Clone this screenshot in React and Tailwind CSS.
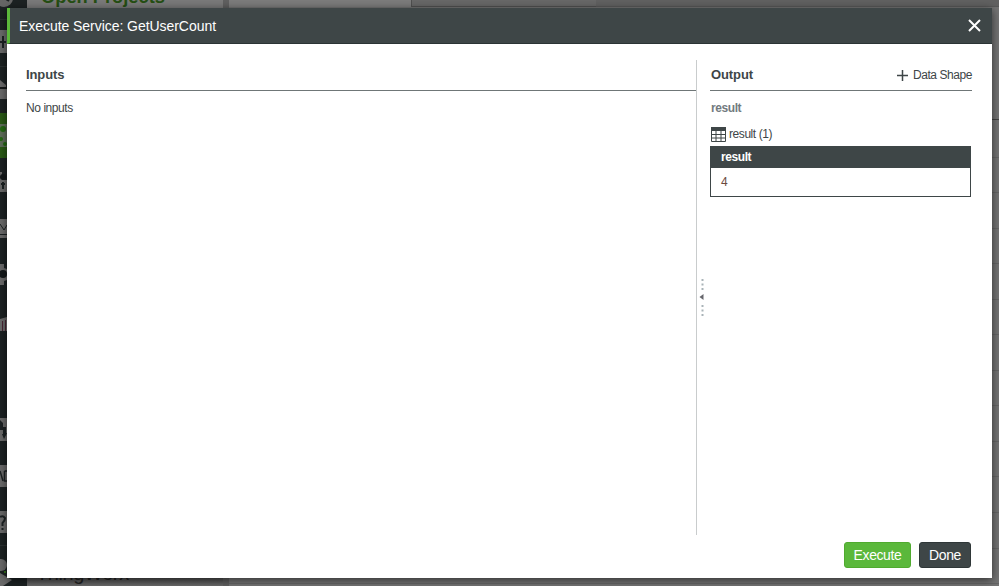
const ROWS = Array.from({ length: 13 }, (_, i) => i)

function Rail() {
  return (
    <div className="h-full w-[27px] shrink-0 bg-[#1c2223]">
      <svg width="27" height="586" viewBox="0 0 27 586" fill="none">
        <circle cx="4" cy="-2" r="9" fill="#666" />
        <path d="M6 -1 L9 1" stroke="#1c2223" strokeWidth="2" />
        <path d="M0 19.5H27M0 66.5H27M0 545.5H27" stroke="#2b3132" />
        <rect y="30" width="10" height="23" fill="#6b6b6b" />
        <path d="M0 42H6M3 36V48" stroke="#1c2223" strokeWidth="2" />
        <path d="M0 80L6 85V87H0Z" fill="#6b6b6b" />
        <rect y="89" width="10" height="10" fill="#6b6b6b" />
        <path d="M0 88H7" stroke="#111" />
        <rect y="113" width="27" height="45" fill="#2a5b16" />
        <path d="M0 124H7V147H0Z" fill="#5f6f5a" />
        <circle cx="3" cy="129" r="3" fill="#246a12" />
        <circle cx="1" cy="139" r="2" fill="#246a12" />
        <circle cx="5" cy="144" r="2" fill="#246a12" />
        <path d="M0 172H2V180H0ZM0 180H7V192H0Z" fill="#6b6b6b" />
        <circle cx="3" cy="177" r="3" fill="#14191a" />
        <path d="M1 184H5M3 182V189" stroke="#1c2223" strokeWidth="2" />
        <rect y="219" width="10" height="19" fill="#6b6b6b" />
        <path d="M0 224L4 230L7 225M0 234.500H7" stroke="#1c2223" />
        <path d="M0 264H4V268L7 269V280L4 281V285H0Z" fill="#6b6b6b" />
        <circle cx="3" cy="274" r="4" fill="#14191a" />
        <path d="M0 319L7 317V331H0Z" fill="#6b6b6b" />
        <path d="M2.500 321V331M5.500 320V331" stroke="#4a2534" />
        <rect y="418" width="10" height="23" fill="#6b6b6b" />
        <path d="M0 420L3 423V427H6V433H7L4 439L2 434H3V430H0Z" fill="#1c2223" />
        <rect y="465" width="10" height="22" fill="#6b6b6b" />
        <path d="M0 471L3 481M4.500 471V481H7M4.500 471H7" stroke="#1c2223" strokeWidth="1.500" />
        <rect y="511" width="10" height="22" fill="#6b6b6b" />
        <path d="M0 517Q3 515 5 518Q5 521 2.500 523V526M2.500 528V530" stroke="#1c2223" strokeWidth="2" />
        <circle cx="1" cy="565" r="6" fill="#6b6b6b" />
        <path d="M0 573L12 580L3 586H0Z" fill="#6b6b6b" />
        <circle cx="5" cy="572" r="1" fill="#3b8d1c" />
      </svg>
    </div>
  )
}

function Backdrop() {
  return (
    <div className="flex h-full overflow-hidden bg-[#747474] tracking-normal">
      <Rail />
      <div className="flex h-full w-[196px] shrink-0 flex-col justify-between bg-[#7a7a7a]">
        <div className="-mt-[15px] ml-[14px] text-[18.300px] leading-6 font-bold whitespace-nowrap text-[#254f13]">
          Open Projects
        </div>
        <div className="h-[24px] bg-[linear-gradient(#4a4a4a,#4a4a4a_60%,#6b6b6b)] pl-[9px] text-[20px] leading-[22px] tracking-[-0.400px] text-[#222]">
          ThingWorx
        </div>
      </div>
      <div className="h-full w-[6px] shrink-0 bg-[#606060]" />
      <div className="flex min-w-0 flex-1 flex-col">
        <div className="flex h-[7px] shrink-0">
          <div className="w-[182px] bg-[#7c7c7c]" />
          <div className="w-[185px] border-b border-l border-[#505050] bg-[#686868]" />
          <div className="flex-1 border-b border-[#595959] bg-[#616161]" />
        </div>
        <div className="h-[112px] shrink-0" />
        <div className="h-[3px] shrink-0 border-t border-[#424242]" />
        {ROWS.map((i) => (
          <div key={i} className="h-[35.55px] shrink-0 border-b border-[#666]" />
        ))}
      </div>
    </div>
  )
}

function TableIcon() {
  return (
    <svg width="15" height="15" viewBox="0 0 15 15" fill="none">
      <path d="M0.500 0.500H14.500V14.500H0.500Z" fill="#fff" stroke="#3e4647" />
      <path d="M0 0H15V4H0Z" fill="#3e4647" />
      <path d="M5 4V15M10 4V15M0 7.500H15M0 11H15" stroke="#3e4647" />
    </svg>
  )
}

function Splitter() {
  return (
    <div className="flex w-[14px] shrink-0 items-center border-l border-[#c9cccd]">
      <svg className="ml-[2px]" width="6" height="38" viewBox="0 0 6 38">
        <path
          d="M2.500 0H4.500V2H2.500ZM2.500 4.500H4.500V6.500H2.500ZM2.500 9H4.500V11H2.500ZM2.500 26H4.500V28H2.500ZM2.500 30.500H4.500V32.500H2.500ZM2.500 35H4.500V37H2.500Z"
          fill="#a9b3b8"
        />
        <path d="M0.500 18L4.500 15V21Z" fill="#66666c" />
      </svg>
    </div>
  )
}

export default function App() {
  return (
    <div className="relative h-[586px] w-[999px] overflow-hidden font-['Liberation_Sans',Arial,sans-serif] text-[12px] tracking-[-0.430px] text-[#3e4647]">
      <Backdrop />
      <div className="absolute top-[8px] left-[7px] flex h-[570px] w-[985px] flex-col bg-white shadow-[0_2px_9px_rgba(0,0,0,0.6)]">
        <header className="flex h-[36px] shrink-0 items-center justify-between border-b border-l-[3px] border-b-[#2b3435] border-l-[#5bb83b] bg-[#3e4647] pr-[11px] pl-[9px] text-white">
          <h1 className="pt-px text-[14px] tracking-[-0.050px]">Execute Service: GetUserCount</h1>
          <svg width="13" height="13" viewBox="0 0 13 13" stroke="#fff" strokeWidth="2">
            <path d="M1 1L12 12M12 1L1 12" />
          </svg>
        </header>

        <main className="mt-[16px] flex h-[475px] shrink-0 pr-[20px] pl-[19px]">
          <section className="min-w-0 flex-1">
            <h2 className="flex h-[31px] items-center border-b border-[#6f7677] text-[13px] font-bold tracking-[-0.100px]">Inputs</h2>
            <p className="mt-[8px] leading-[18px]">No inputs</p>
          </section>
          <Splitter />
          <section className="w-[262px] shrink-0">
            <div className="flex h-[31px] items-center justify-between border-b border-[#6f7677]">
              <h2 className="pl-px text-[13px] font-bold tracking-[-0.100px]">Output</h2>
              <button className="flex items-center gap-[5px]">
                <svg width="11" height="11" viewBox="0 0 11 11" stroke="#3e4647" strokeWidth="1.500">
                  <path d="M0 5.500H11M5.500 0V11" />
                </svg>
                Data Shape
              </button>
            </div>
            <h3 className="mt-[8px] pl-px leading-[18px] font-bold text-[#727b80]">result</h3>
            <div className="mt-[8px] flex h-[18px] items-center gap-[3px] pl-[1px]">
              <TableIcon />
              result (1)
            </div>
            <table className="mt-[3px] w-[261px] border border-[#3e4647] text-left">
              <thead>
                <tr className="h-[21px] bg-[#3e4647] text-white">
                  <th className="px-[10px] leading-[20px]">result</th>
                </tr>
              </thead>
              <tbody>
                <tr className="h-[29px]">
                  <td className="px-[10px] text-[#6b4a3e]">4</td>
                </tr>
              </tbody>
            </table>
          </section>
        </main>

        <footer className="mt-[7px] flex justify-end gap-[8px] pr-[21px] text-[14px] tracking-[-0.400px] text-white">
          <button className="h-[26px] w-[67px] rounded-[3px] border border-[#50aa2f] bg-[#5bb83b]">Execute</button>
          <button className="h-[26px] w-[52px] rounded-[3px] border border-[#2f3738] bg-[#3e4647]">Done</button>
        </footer>
      </div>
    </div>
  )
}
